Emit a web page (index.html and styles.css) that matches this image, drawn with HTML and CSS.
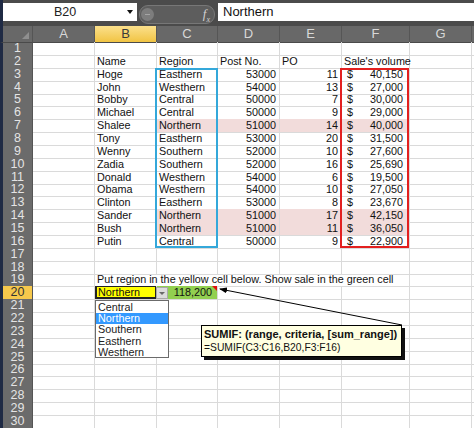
FILE: index.html
```html
<!DOCTYPE html>
<html lang="en">
  <head>
    <meta charset="UTF-8" />
    <meta name="viewport" content="width=device-width, initial-scale=1.0" />
    <title>SUMIF by region</title>
    <link rel="stylesheet" href="styles.css">
  </head>
  <body>
    <div class="formula-bar">
      <div class="name-box">
        <span class="name-text">B20</span>
        <span class="name-arrow"></span>
      </div>
      <div class="fx-pill">
        <span class="pill-dot"></span>
        <span class="fx">f<sub>x</sub></span>
      </div>
      <div class="formula-input">Northern</div>
    </div>

    <div class="sheet">
      <div id="grid"></div>

      <!-- highlighted ranges -->
      <div class="range range-region"></div>
      <div class="range range-sales"></div>

      <!-- comment arrow -->
      <svg class="arrow" width="474" height="403" viewBox="0 0 474 403">
        <defs>
          <marker id="head" markerWidth="8" markerHeight="6" refX="7" refY="3" orient="auto" markerUnits="userSpaceOnUse">
            <path d="M0,0 L8,3 L0,6 Z" fill="#000" />
          </marker>
        </defs>
        <line x1="402" y1="299" x2="220" y2="263" stroke="#000" stroke-width="1" marker-end="url(#head)" />
      </svg>

      <!-- validation dropdown -->
      <div class="dd-button"><span class="dd-caret"></span></div>
      <ul class="dd-list">
        <li>Central</li>
        <li class="picked">Northern</li>
        <li>Southern</li>
        <li>Easthern</li>
        <li>Westhern</li>
      </ul>

      <!-- cell comment -->
      <div class="comment">
        <div class="comment-title">SUMIF: (range, criteria, [sum_range])</div>
        <div class="comment-body">=SUMIF(C3:C16,B20,F3:F16)</div>
      </div>
    </div>

    <script>
      const letters = ["A", "B", "C", "D", "E", "F", "G", ""];
      const people = [
        ["Hoge", "Easthern", 53000, 11, "40,150"],
        ["John", "Westhern", 54000, 13, "27,000"],
        ["Bobby", "Central", 50000, 7, "30,000"],
        ["Michael", "Central", 50000, 9, "29,000"],
        ["Shalee", "Northern", 51000, 14, "40,000"],
        ["Tony", "Easthern", 53000, 20, "31,500"],
        ["Wenny", "Southern", 52000, 10, "27,600"],
        ["Zadia", "Southern", 52000, 16, "25,690"],
        ["Donald", "Westhern", 54000, 6, "19,500"],
        ["Obama", "Westhern", 54000, 10, "27,050"],
        ["Clinton", "Easthern", 53000, 8, "23,670"],
        ["Sander", "Northern", 51000, 17, "42,150"],
        ["Bush", "Northern", 51000, 11, "36,050"],
        ["Putin", "Central", 50000, 9, "22,900"]
      ];
      const grid = document.getElementById("grid");

      function cell(row, cls, html) {
        const div = document.createElement("div");
        div.className = "cell " + (cls || "");
        div.innerHTML = html || "";
        row.appendChild(div);
        return div;
      }

      // column headers
      const head = document.createElement("div");
      head.className = "row head";
      cell(head, "corner");
      letters.forEach((l) => cell(head, "ch" + (l === "B" ? " ch-on" : ""), l));
      grid.appendChild(head);

      for (let r = 1; r <= 30; r++) {
        const row = document.createElement("div");
        row.className = "row";
        cell(row, "rh" + (r === 20 ? " rh-on" : ""), r);
        cell(row, ""); // column A

        if (r === 2) {
          ["Name", "Region", "Post No.", "PO", "Sale's volume", "", ""].forEach((t) =>
            cell(row, "", t)
          );
        } else if (r >= 3 && r <= 16) {
          const p = people[r - 3];
          const tint = p[1] === "Northern" ? " pink" : "";
          cell(row, "", p[0]);
          cell(row, tint, p[1]);
          cell(row, "num" + tint, p[2]);
          cell(row, "num" + tint, p[3]);
          cell(row, "money" + tint, "<span>$</span><span>" + p[4] + "</span>");
          cell(row, "");
          cell(row, "");
        } else if (r === 19) {
          cell(row, "note", "Put region in the yellow cell below. Show sale in the green cell");
          cell(row, "");
          cell(row, "");
        } else if (r === 20) {
          cell(row, "pick", "Northern");
          cell(row, "num total", "118,200");
          ["", "", "", "", ""].forEach(() => cell(row, ""));
        } else {
          for (let c = 0; c < 7; c++) cell(row, "");
        }
        grid.appendChild(row);
      }
    </script>
  </body>
</html>
```

FILE: styles.css
```css
body {
  margin: 0;
  padding: 0;
  font-family: "Liberation Sans", Arial, sans-serif;
  background: #fff;
  overflow: hidden;
}
.formula-bar {
  height: 26px;
  background: #4b4b4b;
  border-left: 3px solid #1f2a44;
  display: flex;
  align-items: flex-start;
  padding-top: 3px;
  box-sizing: border-box;
}
.name-box {
  width: 134px;
  height: 18px;
  background: #fff;
  display: flex;
  align-items: center;
}
.name-text {
  flex: 1;
  text-align: center;
  font-size: 12.5px;
  color: #222;
}
.name-arrow {
  width: 0;
  height: 0;
  border-left: 3.5px solid transparent;
  border-right: 3.5px solid transparent;
  border-top: 4px solid #111;
  margin-right: 4px;
}
.fx-pill {
  width: 69px;
  height: 17px;
  margin: 2px 0 0 2px;
  border-radius: 9px;
  background: #5d5d5d;
  border: 1px solid #777;
  display: flex;
  align-items: center;
  justify-content: space-between;
  padding: 0 4px 0 1px;
}
.pill-dot {
  width: 13px;
  height: 13px;
  border-radius: 50%;
  background: #7d7d7d;
  position: relative;
}
.pill-dot::after {
  content: "";
  position: absolute;
  left: 4px;
  top: 6px;
  width: 5px;
  height: 1px;
  background: #a5a5a5;
}
.fx {
  font-family: "Liberation Serif", serif;
  font-style: italic;
  font-size: 13px;
  color: #d0d0d0;
}
.fx sub {
  font-size: 8px;
}
.formula-input {
  flex: 1;
  height: 18px;
  margin-left: 3px;
  background: #fff;
  font-size: 13px;
  line-height: 18px;
  padding-left: 5px;
  color: #111;
}

/* sheet */
.sheet {
  position: relative;
}
.row {
  display: grid;
  grid-template-columns: 33px 62px 62px 61px 62px 62px 68px 62px 2px;
  height: 12.87px;
}
.row.head {
  height: 16px;
}
.cell {
  box-sizing: border-box;
  border-right: 1px solid #dadada;
  border-bottom: 1px solid #dadada;
  font-size: 10.8px;
  line-height: 12.8px;
  padding: 0 2px;
  white-space: nowrap;
  color: #111;
  min-width: 0;
}
.corner {
  background: #686868;
  border-left: 3px solid #1f2a44;
  border-right: 1px solid #555;
  border-bottom: 1px solid #4a4a4a;
  position: relative;
}
.corner::after {
  content: "";
  position: absolute;
  right: 3px;
  bottom: 3px;
  border-left: 7px solid transparent;
  border-bottom: 7px solid #8f8f8f;
}
.ch {
  background: #686868;
  color: #d8d8d8;
  font-size: 13px;
  line-height: 16px;
  text-align: center;
  border-right: 1px solid #565656;
  border-bottom: 1px solid #4a4a4a;
}
.ch-on {
  background: linear-gradient(#fbe08c, #f1c443);
  color: #3a3a3a;
}
.rh {
  background: #6b6b6b;
  color: #e4e4e4;
  font-size: 12.5px;
  line-height: 13px;
  text-align: center;
  border-left: 3px solid #1f2a44;
  border-right: 1px solid #555;
  border-bottom: 1px solid #5e5e5e;
}
.rh-on {
  background: #f6c84c;
  color: #333;
}
.num {
  text-align: right;
  padding-right: 3px;
}
.money {
  display: flex;
  justify-content: space-between;
  padding: 0 6px 0 5px;
}
.pink {
  background: #f2dcdb;
}
.note {
  grid-column: span 5;
}
.pick {
  background: #ffff00;
  box-shadow: inset 0 0 0 1px #222, inset 1px -1px 0 1px #222;
  padding-left: 3px;
}
.total {
  background: #92d050;
  position: relative;
  padding-right: 5px;
}
.total::after {
  content: "";
  position: absolute;
  right: 0;
  top: 0;
  border-left: 5px solid transparent;
  border-top: 5px solid #e01010;
}

/* overlays */
.range {
  position: absolute;
  box-sizing: border-box;
  top: 41.7px;
  height: 180.5px;
  border: 2px solid;
  pointer-events: none;
}
.range-region {
  left: 155px;
  width: 63px;
  border-color: #34a8da;
}
.range-sales {
  left: 340px;
  width: 69px;
  border-color: #e3201f;
}
.arrow {
  position: absolute;
  left: 0;
  top: 0;
  pointer-events: none;
}
.dd-button {
  position: absolute;
  left: 156px;
  top: 261px;
  width: 12px;
  height: 12px;
  box-sizing: border-box;
  background: #dcdcdc;
  border: 1px solid #a8a8a8;
  display: flex;
  align-items: center;
  justify-content: center;
}
.dd-caret {
  border-left: 3px solid transparent;
  border-right: 3px solid transparent;
  border-top: 3px solid #6a6a6a;
}
.dd-list {
  position: absolute;
  left: 95px;
  top: 274px;
  width: 74px;
  height: 58px;
  margin: 0;
  padding: 1px 0 0;
  list-style: none;
  box-sizing: border-box;
  background: #fff;
  border: 1px solid #6b6b6b;
}
.dd-list li {
  font-size: 10.8px;
  line-height: 11.2px;
  padding-left: 2px;
  color: #222;
}
.dd-list li.picked {
  background: #3399ff;
  color: #fff;
}
.comment {
  position: absolute;
  left: 201px;
  top: 299px;
  width: 201px;
  height: 32px;
  box-sizing: border-box;
  background: #ffffe1;
  border: 1px solid #000;
  box-shadow: 3px 3px 0 #111;
  padding: 1px 2px;
  color: #111;
}
.comment-title {
  font-weight: bold;
  font-size: 11px;
  line-height: 14px;
}
.comment-body {
  font-size: 10.3px;
  line-height: 14px;
}
```
